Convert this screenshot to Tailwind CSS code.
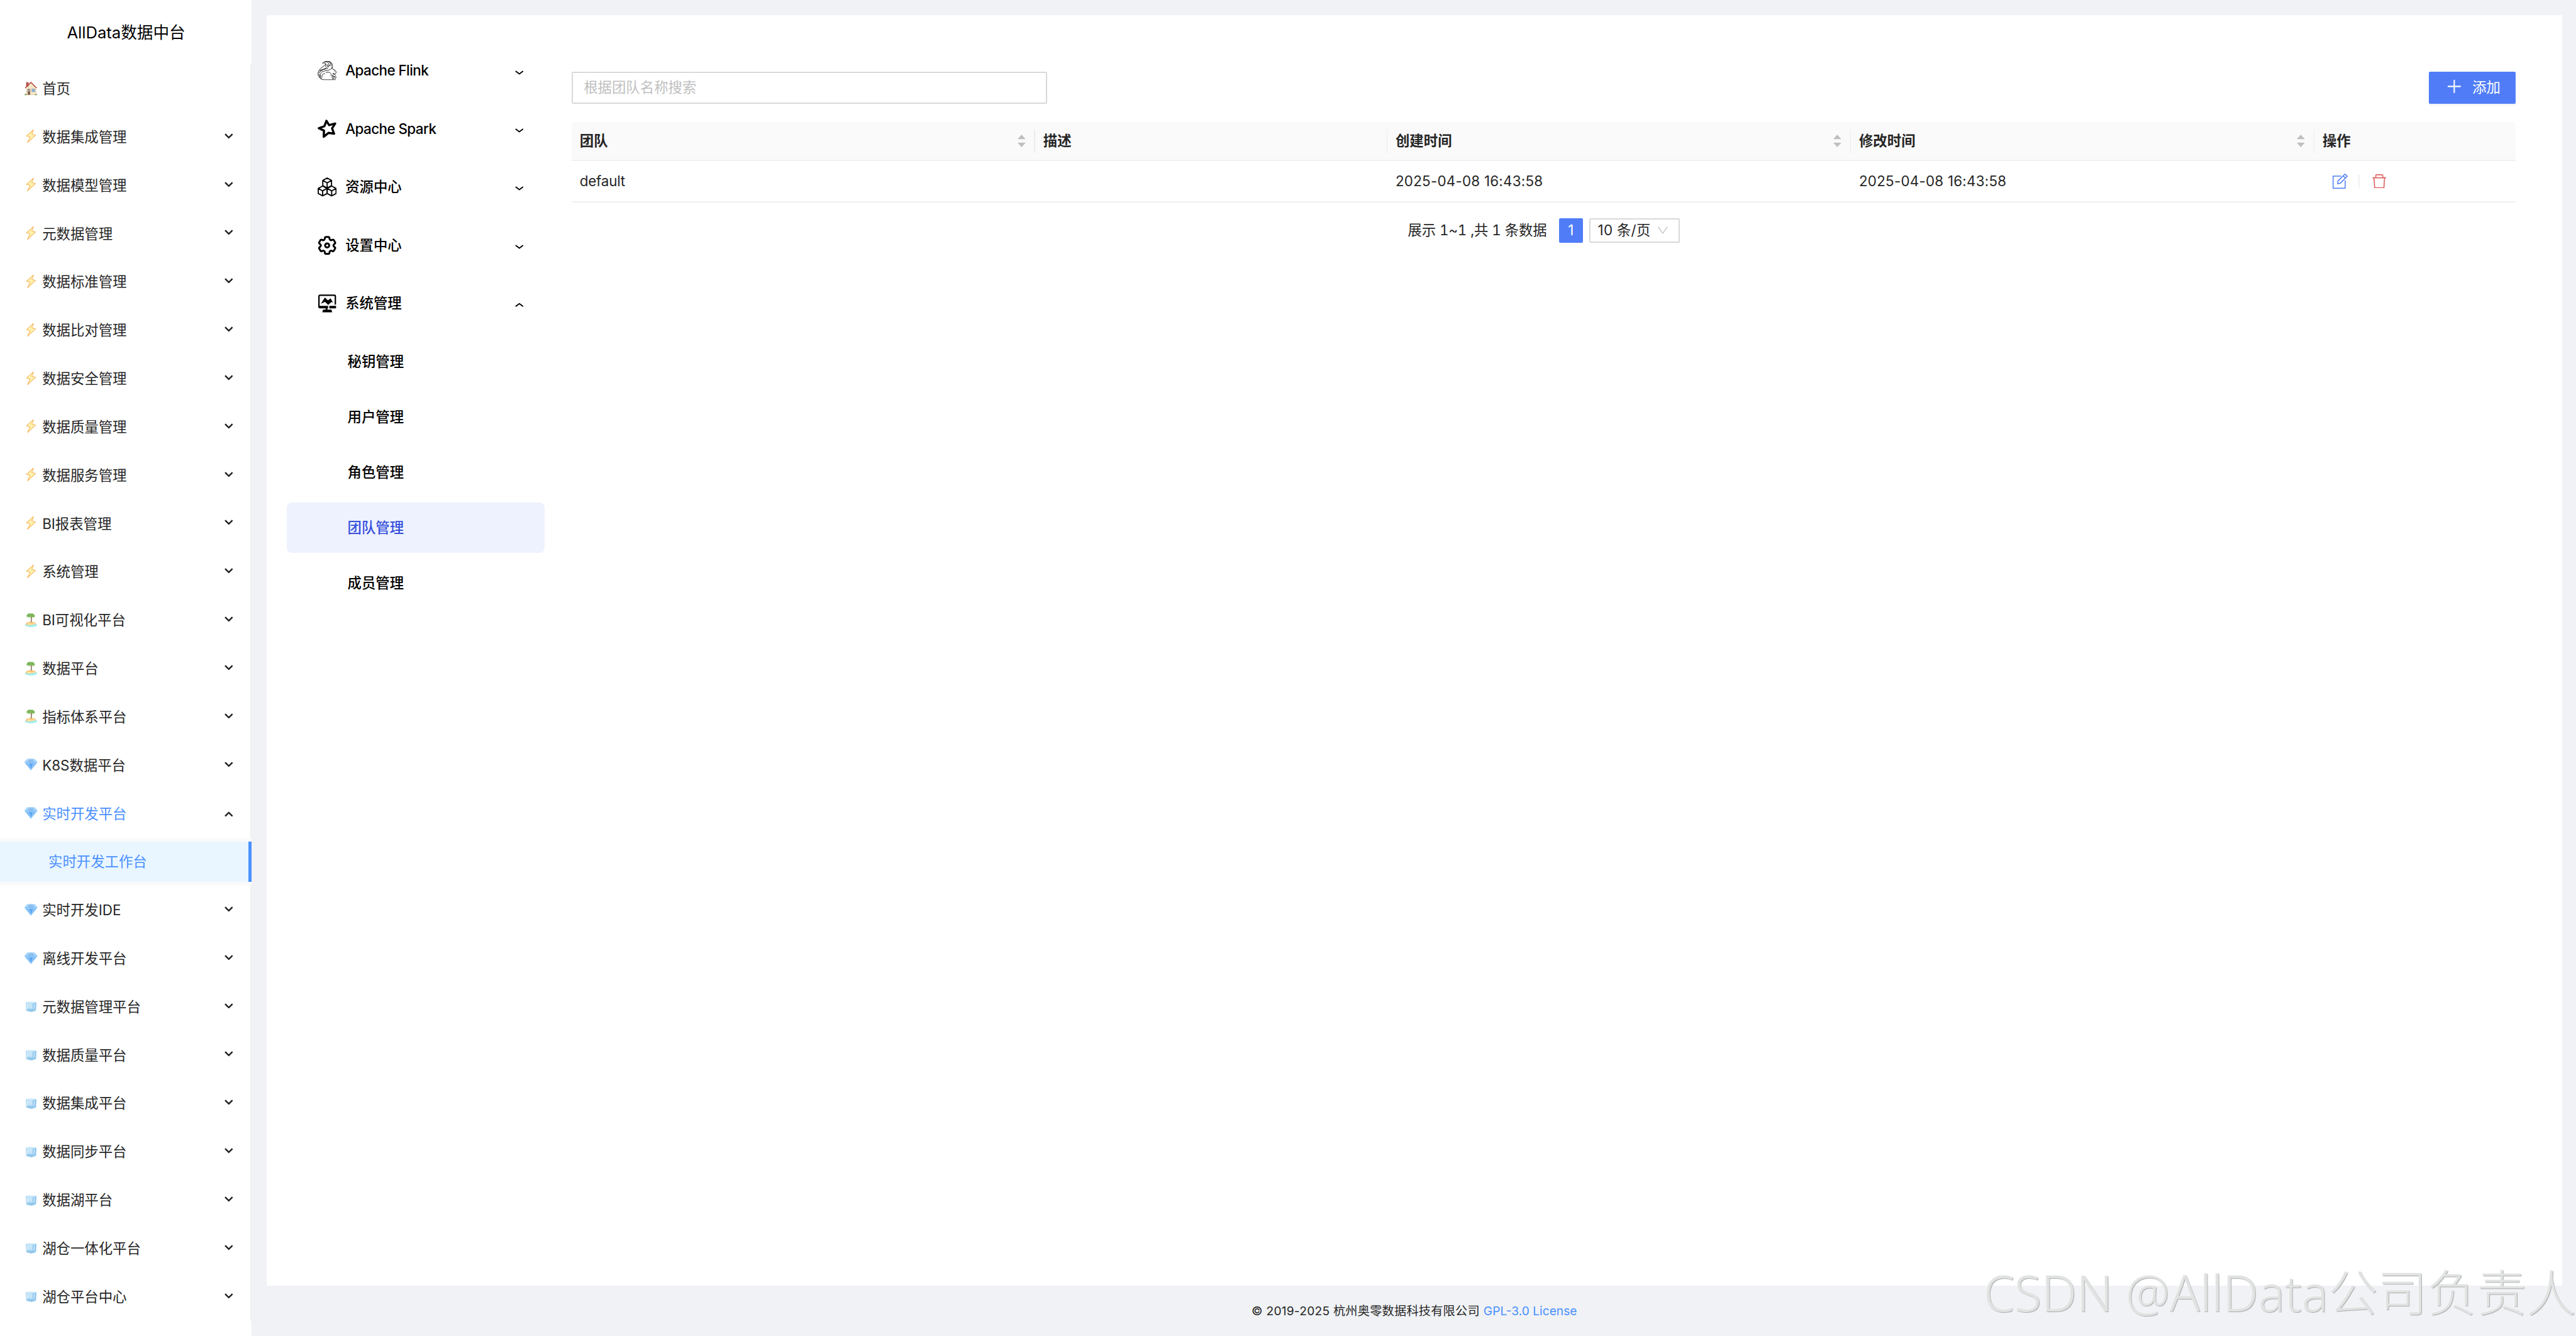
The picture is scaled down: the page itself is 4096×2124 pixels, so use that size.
<!DOCTYPE html>
<html lang="zh-CN">
<head>
    <meta charset="UTF-8">
    <meta name="viewport" content="width=device-width, initial-scale=1.0">
    <title>AllData数据中台</title>
    <script src="https://cdn.jsdelivr.net/npm/@tailwindcss/browser@4"></script>
</head>
<body class="bg-[#f0f2f5] font-['Inter','Noto_Sans_CJK_SC',sans-serif] text-[22.4px] leading-none text-[#262626] w-[4096px] h-[2124px] overflow-hidden flex relative">

    <!-- Icon sprite -->
    <svg class="hidden">
        <symbol id="icon-home" viewBox="0 0 28 28">
            <path d="M4.5 1h5v9h-5z" fill="#b5524a"/>
            <path d="M5 12.5 14.5 3 24 12.5V26H5z" fill="#f3e6c6" stroke="#cbb68f" stroke-width=".6"/>
            <path d="M2.5 12.5 14 1.2 25.5 12.5" fill="none" stroke="#b9504a" stroke-width="2"/>
            <path d="M7.5 14.5h5V26h-5z" fill="#8a5c4a"/>
            <path d="M9 15.5h2.5v4H9z" fill="#a9d2ee"/>
            <path d="M15.5 14h6.5v6h-6.5z" fill="#7db4ea" stroke="#c9a98a" stroke-width=".8"/>
            <path d="M1 26.6c0-3 4-4 5-1l.3 1zM21.5 26.6c0-3.500 5-3.500 5.500 0z" fill="#86a860"/>
        </symbol>
        <symbol id="icon-bolt" viewBox="0 0 28 28">
            <path d="M19.300 0 5.200 12.700l7.200 1.600L7 25.800 23.200 11l-7.400-2z" fill="#fff3b0" stroke="#f6b55c" stroke-width="1.300" stroke-linejoin="round"/>
        </symbol>
        <symbol id="icon-island" viewBox="0 -1 28 28">
            <ellipse cx="14.200" cy="22" rx="12" ry="4.600" fill="#a5efee"/>
            <path d="M3.500 20.500c.5-3.500 6-4.500 10.500-4.500s10 1 10.500 4c-2 2-6 .8-10 2.300-4 1.200-9.500.3-11-1.800z" fill="#f7c478"/>
            <path d="M5.500 20c4-2.500 8 1 12-.5 3-1 4.500-1 6.500.2-3 1.500-6 .8-9.500 1.600-4 1-7.500.4-9-1.300z" fill="#fdeebb"/>
            <path d="M14.200 4c1 4 1 8 .2 12.500" fill="none" stroke="#8b6b58" stroke-width="1.900"/>
            <path d="M13.500 0C9-2 5.500 1 5 6.500L7.500 5l.3 3.500L10 5.500l1 3.200L13.500 5l3 3.800.7-3 3 2.700V5.200l2 1.300C21.500 1 18-2 13.500 0z" fill="#7cb65a"/>
        </symbol>
        <symbol id="icon-gem" viewBox="0 0 28 28">
            <path d="M6.500 2.300Q14 .8 21.500 2.300L27 8.500 14 24.800 1 8.500z" fill="#7dbdf8"/>
            <path d="M6.500 2.300Q14 .8 21.500 2.300L27 8.500Q14 6 1 8.500z" fill="#a8d6fb"/>
            <path d="M8.500 9.500h11L14 24.800z" fill="#5fa9f3"/>
            <path d="M9.500 3.500h9l1 5.500q-5.500 2-11 0z" fill="#8abdf0"/>
            <path d="M1 8.500Q14 12.500 27 8.500M8.500 10 14 24.800 19.500 10" fill="none" stroke="#c5e5fd" stroke-width=".8"/>
        </symbol>
        <symbol id="icon-ice" viewBox="0 0 28 28">
            <path d="M3.500 5.500q9-2.500 21.500 0L24 22l-9 3-10.500-2.500z" fill="#b9dff7"/>
            <path d="M3.500 5.500q9-2.500 21.500 0l-7.500 1.700Q9 7 3.500 5.500z" fill="#d5edfb"/>
            <path d="M17.500 7.500 25 5.500 24 22l-7 2.500z" fill="#98cbf0"/>
            <path d="M4.500 22 9 18.500l7 .7 7.500 2-8.500 3.600z" fill="#92c7ea"/>
            <path d="M7 8v9M10.500 8.500l-1 8M14 8.500v8M20.500 8.500l-.5 10" stroke="#eaf6fe" stroke-width="1.100"/>
        </symbol>
        <symbol id="icon-flink" viewBox="33 33 114 114">
            <g fill="none" stroke="#000" stroke-width="3.200" stroke-linecap="round" stroke-linejoin="round">
                <path d="M63 46C74 31 104 30 117 45c8 11 7 23-1 33"/>
                <path d="M63 46c8-5 18 0 19 5-6 11-21 16-31 27-14 12-19 30-13 43 6 14 17 23 32 24h62"/>
                <path d="M116 78c-14 14-36 10-53 18-14 7-18 20-11 32"/>
                <path d="M82 51c3 6 1 11-3 15M92 54c2 6-2 14-8 20-12 7-28 10-38 24M100 48c2 8 0 14-5 20 6-2 10-6 13-12"/>
                <path d="M104 38c8 6 12 14 10 24M96 36c8 2 14 8 16 14M78 38c8-1 16 2 20 8"/>
                <path d="M46 88c16-4 32-4 48-12M42 104c4-8 10-14 18-16M42 112c2 12 8 22 16 27M60 130c-4-12 2-22 16-22"/>
                <path d="M117 70c4 6 5 8 7 12 12 2 20 12 20 20-2 8-12 8-18 5M132 92l2 1M84 102c14-6 28 0 30 10M124 110c8 0 14 4 18 10"/>
                <path d="M116 128c6-8 14-6 16 0 8-6 14 0 10 6l-6 4 2 8M122 128l2 14M132 128l-4 10M112 118c10-2 16 2 20 8"/>
            </g>
        </symbol>
        <symbol id="icon-spark" viewBox="0 0 38 38">
            <path d="m17.500 2.500 5.300 8.700L35 8l-6.200 9.700 4 10.500-10.800-1.700-9.800 7.800.5-12.300-10.200-4.700 11-4z" fill="none" stroke="#000" stroke-width="4.300" stroke-linejoin="round"/>
        </symbol>
        <symbol id="icon-cubes" viewBox="0 0 38 38">
            <g fill="none" stroke="#000" stroke-width="2.300" stroke-linejoin="round">
                <path d="m19 1.300 8.700 4.800v10.300L19 21.200l-8.700-4.800V6.100zM10.300 6.100l8.700 4.800 8.700-4.800M19 10.900v10.300"/>
                <path d="m10 17.200 9 4.800v10l-9 4.800-8.700-4.800V22zM1.300 22l8.700 4.800 9-4.800M10 26.800v10"/>
                <path d="m28 17.200 8.700 4.800v10L28 36.800 19 32V22zM19 22l9 4.800 8.700-4.800M28 26.800v10"/>
            </g>
        </symbol>
        <symbol id="icon-cog" viewBox="1.800 1.800 20.400 20.400">
            <g fill="none" stroke="#000" stroke-width="2" stroke-linejoin="round">
                <path d="M9.594 3.940c.09-.542.56-.94 1.110-.94h2.593c.55 0 1.020.398 1.110.94l.213 1.281c.063.374.313.686.645.87.074.04.147.083.22.127.325.196.72.257 1.075.124l1.217-.456a1.125 1.125 0 0 1 1.370.49l1.296 2.247a1.125 1.125 0 0 1-.26 1.431l-1.003.827c-.293.241-.438.613-.43.992a7.723 7.723 0 0 1 0 .255c-.008.378.137.75.43.991l1.004.827c.424.35.534.955.26 1.430l-1.298 2.247a1.125 1.125 0 0 1-1.369.491l-1.217-.456c-.355-.133-.75-.072-1.076.124a6.470 6.470 0 0 1-.22.128c-.331.183-.581.495-.644.869l-.213 1.281c-.09.543-.56.94-1.110.94h-2.594c-.55 0-1.019-.398-1.110-.94l-.213-1.281c-.062-.374-.312-.686-.644-.87a6.520 6.520 0 0 1-.22-.127c-.325-.196-.72-.257-1.076-.124l-1.217.456a1.125 1.125 0 0 1-1.369-.49l-1.297-2.247a1.125 1.125 0 0 1 .26-1.431l1.004-.827c.292-.24.437-.613.43-.991a6.932 6.932 0 0 1 0-.255c.007-.38-.138-.751-.43-.992l-1.004-.827a1.125 1.125 0 0 1-.26-1.430l1.297-2.247a1.125 1.125 0 0 1 1.370-.491l1.216.456c.356.133.751.072 1.076-.124.072-.044.146-.086.22-.128.332-.183.582-.495.644-.869l.214-1.280Z"/>
                <circle cx="12" cy="12" r="2.200"/>
            </g>
        </symbol>
        <symbol id="icon-monitor" viewBox="0 0 38 38">
            <path d="M2.700 25V5a2 2 0 0 1 2-2h28.600a2 2 0 0 1 2 2v16.500" fill="none" stroke="#000" stroke-width="2.800"/>
            <path d="M1.300 24h19.500v5H19.500v2.500h8l1.500 5.500H9.300l1.500-5.500H16V29H4a2.700 2.700 0 0 1-2.700-2.700zM23.300 24h13.400v5H23.300zM6.500 19.800 14.500 7.500l6 5.500 5.500-4 4.800 9.500-3-2.300-6.800 6-6.200-6z"/>
        </symbol>
        <symbol id="icon-edit" viewBox="0 0 30 30">
            <path d="M17 5H1v24h24V13.500M10 20.300l.8-5.800L24.500 1l4.400 4.200-13.600 14zM21 4.500l4.300 4.200" fill="none" stroke="currentColor" stroke-width="1.900" stroke-linejoin="round"/>
        </symbol>
        <symbol id="icon-trash" viewBox="0 0 28 28">
            <path d="M.5 7h27M3.500 7l1.300 20h18.400l1.300-20M7 6.500V3q0-1.800 1.800-1.800h10.400Q21 1.200 21 3v3.500" fill="none" stroke="currentColor" stroke-width="2.100" stroke-linejoin="round"/>
        </symbol>
        <symbol id="icon-sorter" viewBox="0 0 16 25">
            <path d="M8 0l8 9H0zM8 25l8-9H0z" fill="#bfbfbf"/>
        </symbol>
        <symbol id="icon-chevron" viewBox="0 0 17 11">
            <path d="M1.200 1.500 8.500 8.500l7.300-7" fill="none" stroke="currentColor" stroke-width="3"/>
        </symbol>
        <symbol id="icon-chevron-thin" viewBox="0 0 17 9">
            <path d="M1 1.300 8.500 6.800 16 1.300" fill="none" stroke="currentColor" stroke-width="2.400" stroke-linejoin="round"/>
        </symbol>
    </svg>

    <!-- Sidebar -->
    <aside class="w-[400px] h-full bg-white shrink-0 flex flex-col">
        <h1 class="h-[102.4px] pt-[2px] pl-px shrink-0 flex items-center justify-center text-[25.6px] text-black">AllData数据中台</h1>
        <ul id="main-menu" class="flex-1"></ul>
    </aside>

    <div class="flex-1 flex flex-col pl-6 pr-[22.4px] pt-6">
        <!-- Page card -->
        <main class="h-[2020px] shrink-0 bg-white rounded-[2px] flex pr-[73.6px]">
            <nav class="w-[485px] shrink-0 pl-8 pt-[42.4px] text-black font-medium">
                <ul id="app-menu" class="w-[410px]"></ul>
            </nav>

            <section class="flex-1 pt-[89.6px]">
                <!-- Search and add -->
                <div class="flex justify-between">
                    <div class="w-[756px] h-[51.2px] border-2 border-[#d9d9d9] rounded-[2px] flex items-center pl-[17.2px] text-[#bfbfbf]">根据团队名称搜索</div>
                    <button class="w-[137.6px] h-[51.2px] bg-[#507df7] text-white rounded-[2px] flex items-center pl-[29.6px] gap-[18.4px] shadow-[0_3px_0_rgba(0,0,0,0.045)]">
                        <svg class="w-[20.8px] h-[20.8px] mb-1" viewBox="0 0 26 26"><path d="M13 0v26M0 13h26" stroke="currentColor" stroke-width="2.600"/></svg>
                        <span class="pt-px">添加</span>
                    </button>
                </div>

                <!-- Team table -->
                <div class="mt-[28.8px]">
                    <div id="team-head" class="grid grid-cols-[737px_560.2px_737px_737px_1fr] h-[62.4px] bg-[#fafafa] border-b-2 border-[#f0f0f0] rounded-t-[6px] font-semibold"></div>
                    <div id="team-body"></div>
                </div>

                <!-- Pagination -->
                <div class="flex items-center justify-center mt-[25.6px] h-[38.4px]">
                    <span id="total" class="mr-[19px] tabular-nums tracking-[-0.1px]">展示 1~1 ,共 1 条数据</span>
                    <span class="w-[38.4px] h-[38.4px] bg-[#507df7] text-white rounded-[2px] flex items-center justify-center">1</span>
                    <span class="ml-[9.6px] w-[144px] h-[38.4px] border-2 border-[#d9d9d9] rounded-[2px] flex items-center justify-between pl-[12px] pr-[17px]">
                        <span class="tracking-[0.3px]">10 条/页</span>
                        <svg class="w-4 h-3" viewBox="0 0 20 15"><path d="M.8.800 10 13.500 19.200.8" fill="none" stroke="#c4c4c4" stroke-width="1.800"/></svg>
                    </span>
                </div>
            </section>
        </main>

        <footer class="flex-1 pt-[2px] flex items-center justify-center gap-[6px] text-[19.2px]">
            <span class="tracking-[0.22px]">© 2019-2025 杭州奥零数据科技有限公司</span>
            <a href="#" class="text-[#4a90ff]">GPL-3.0 License</a>
        </footer>
    </div>

    <!-- Watermark -->
    <div class="absolute right-0 bottom-[29px] whitespace-nowrap text-[78.8px] font-light text-[#e1e3e2] font-['Noto_Sans','Noto_Sans_CJK_SC',sans-serif] [text-shadow:1px_1px_1px_#a9aaac,-1px_-1px_1px_#f6f6f7]">CSDN @AllData公司负责人</div>

    <script>
        const mainMenu = [
            { icon: 'home', label: '首页', leaf: true },
            { icon: 'bolt', label: '数据集成管理' },
            { icon: 'bolt', label: '数据模型管理' },
            { icon: 'bolt', label: '元数据管理' },
            { icon: 'bolt', label: '数据标准管理' },
            { icon: 'bolt', label: '数据比对管理' },
            { icon: 'bolt', label: '数据安全管理' },
            { icon: 'bolt', label: '数据质量管理' },
            { icon: 'bolt', label: '数据服务管理' },
            { icon: 'bolt', label: 'BI报表管理' },
            { icon: 'bolt', label: '系统管理' },
            { icon: 'island', label: 'BI可视化平台' },
            { icon: 'island', label: '数据平台' },
            { icon: 'island', label: '指标体系平台' },
            { icon: 'gem', label: 'K8S数据平台' },
            { icon: 'gem', label: '实时开发平台', children: ['实时开发工作台'] },
            { icon: 'gem', label: '实时开发IDE' },
            { icon: 'gem', label: '离线开发平台' },
            { icon: 'ice', label: '元数据管理平台' },
            { icon: 'ice', label: '数据质量平台' },
            { icon: 'ice', label: '数据集成平台' },
            { icon: 'ice', label: '数据同步平台' },
            { icon: 'ice', label: '数据湖平台' },
            { icon: 'ice', label: '湖仓一体化平台' },
            { icon: 'ice', label: '湖仓平台中心' },
        ];

        const appMenu = [
            { icon: 'flink', label: 'Apache Flink' },
            { icon: 'spark', label: 'Apache Spark' },
            { icon: 'cubes', label: '资源中心' },
            { icon: 'cog', label: '设置中心' },
            { icon: 'monitor', label: '系统管理', children: ['秘钥管理', '用户管理', '角色管理', '团队管理', '成员管理'] },
        ];
        const activeApp = '团队管理';

        const columns = [
            { title: '团队', sort: true },
            { title: '描述' },
            { title: '创建时间', sort: true },
            { title: '修改时间', sort: true },
            { title: '操作' },
        ];
        const teams = [
            { name: 'default', desc: '', created: '2025-04-08 16:43:58', modified: '2025-04-08 16:43:58' },
        ];

        // Left menu, the open group shows its selected page below it
        document.getElementById('main-menu').innerHTML = mainMenu.map(item => `
            <li>
                <div class="h-[76.83px] pl-[38.4px] pr-[27.6px] flex items-center border-r-2 border-[#f0f0f0] ${item.children ? 'text-[#4a90ff]' : ''}">
                    <svg class="w-[22.4px] h-[22.4px] mr-[6.4px] overflow-visible"><use href="#icon-${item.icon}"/></svg>
                    <span class="flex-1 pt-px">${item.label}</span>
                    ${item.leaf ? '' : `<svg class="w-[13.6px] h-[8.8px] text-[#1f1f1f] ${item.children ? 'rotate-180 mt-[2px]' : 'mb-[3px]'}"><use href="#icon-chevron"/></svg>`}
                </div>
                ${(item.children || []).map(child => `
                    <div class="bg-[#fafafa] h-[76.83px] py-[6.4px]">
                        <div class="h-16 pt-px bg-[#e9f6ff] border-r-[5px] border-[#4a90ff] pl-[77px] flex items-center text-[#4a90ff]">${child}</div>
                    </div>
                `).join('')}
            </li>
        `).join('');

        document.getElementById('app-menu').innerHTML = appMenu.map(item => `
            <li>
                <div class="h-[92.48px] pl-[48.8px] pr-[33px] flex items-center">
                    <svg class="w-[30.4px] h-[30.4px] mr-[14px]"><use href="#icon-${item.icon}"/></svg>
                    <span class="flex-1 ${item.label.startsWith('Apache') ? 'tracking-[-0.025em]' : ''}">${item.label}</span>
                    <svg class="w-[13.6px] h-[7.2px] ${item.children ? 'rotate-180 mt-[4px]' : 'mt-[5px]'}"><use href="#icon-chevron-thin"/></svg>
                </div>
                ${item.children ? `
                    <ul class="pt-[6.2px] flex flex-col gap-2">
                        ${item.children.map(child => `
                            <li class="h-20 pt-px pl-[96.5px] flex items-center rounded-[8px] ${child === activeApp ? 'bg-[#eef2fe] text-[#3650dc]' : ''}">${child}</li>
                        `).join('')}
                    </ul>
                ` : ''}
            </li>
        `).join('');

        document.getElementById('team-head').innerHTML = columns.map((col, i) => `
            <div class="flex items-center justify-between pl-[12.8px]">
                <span>${col.title}</span>
                <span class="flex items-center gap-[13.6px]">
                    ${col.sort ? '<svg class="w-[12.8px] h-5"><use href="#icon-sorter"/></svg>' : ''}
                    ${i < columns.length - 1 ? '<i class="w-[1.6px] h-9 bg-[#ececec]"></i>' : ''}
                </span>
            </div>
        `).join('');

        document.getElementById('team-body').innerHTML = teams.map(team => `
            <div class="grid grid-cols-[737px_560.2px_737px_737px_1fr] h-[65.6px] items-center border-b-2 border-[#f0f0f0]">
                <span class="pl-[12.8px] pt-px tracking-[-0.01em]">${team.name}</span>
                <span class="pl-[12.8px] pt-px">${team.desc}</span>
                <span class="pl-[12.8px] pt-px tracking-[0.22px]">${team.created}</span>
                <span class="pl-[12.8px] pt-px tracking-[0.22px]">${team.modified}</span>
                <span class="pl-[28.8px] flex items-center">
                    <svg class="w-6 h-6 text-[#507df7]"><use href="#icon-edit"/></svg>
                    <i class="w-[1.6px] h-5 bg-[#f0f0f0] ml-[17.5px] mr-[19.5px]"></i>
                    <svg class="w-[22.4px] h-[22.4px] text-[#e06464]"><use href="#icon-trash"/></svg>
                </span>
            </div>
        `).join('');
    </script>
</body>
</html>
